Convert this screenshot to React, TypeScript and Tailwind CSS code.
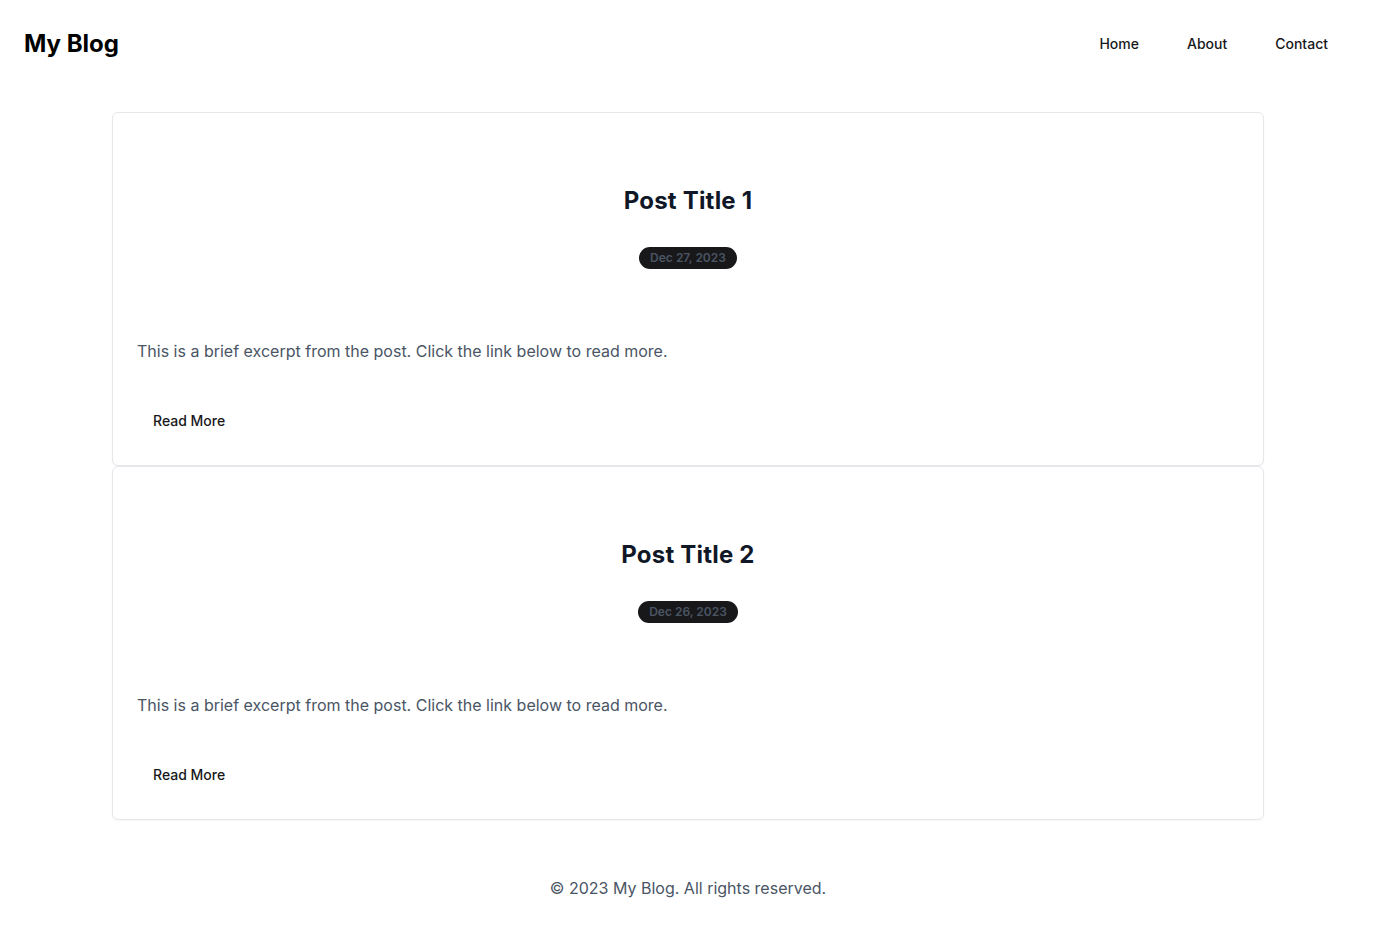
const posts = [
  { title: "Post Title 1", date: "Dec 27, 2023" },
  { title: "Post Title 2", date: "Dec 26, 2023" },
];

function PostCard({ title, date }: { title: string; date: string }) {
  return (
    <article className="rounded-md border border-gray-200 bg-white shadow-[0_1px_2px_rgba(0,0,0,0.04)]">
      <div className="flex flex-col items-center px-6 pt-[72px]">
        <h2 className="text-2xl leading-8 font-bold tracking-[0.2px] text-gray-900">{title}</h2>
        <span className="mt-[30px] rounded-full bg-[#18181b] px-[11px] py-[3px] text-xs leading-4 font-semibold text-[#4b5563]">
          {date}
        </span>
      </div>
      <div className="px-6 pt-[70px]">
        <p className="text-base leading-6 text-gray-600">
          This is a brief excerpt from the post. Click the link below to read more.
        </p>
      </div>
      <div className="px-6 pt-[38px] pb-6">
        <button
          type="button"
          className="h-10 rounded-md px-4 text-sm font-medium text-[#18181b] hover:bg-gray-100"
        >
          Read More
        </button>
      </div>
    </article>
  );
}

export default function App() {
  return (
    <div className="min-h-screen bg-white font-['Inter',sans-serif] text-[#18181b]">
      <header className="flex items-center justify-between px-6 py-6">
        <h1 className="text-2xl leading-8 font-bold text-black">My Blog</h1>
        <nav className="flex items-center">
          {["Home", "About", "Contact"].map((l) => (
            <a
              key={l}
              href="#"
              className="flex h-10 items-center rounded-md px-6 text-sm font-medium text-[#18181b] hover:bg-gray-100"
            >
              {l}
            </a>
          ))}
        </nav>
      </header>
      <main className="mx-auto flex max-w-6xl flex-col py-6">
        {posts.map((p) => (
          <PostCard key={p.title} {...p} />
        ))}
      </main>
      <footer className="py-8 text-center text-base leading-6 text-gray-600">
        © 2023 My Blog. All rights reserved.
      </footer>
    </div>
  );
}
